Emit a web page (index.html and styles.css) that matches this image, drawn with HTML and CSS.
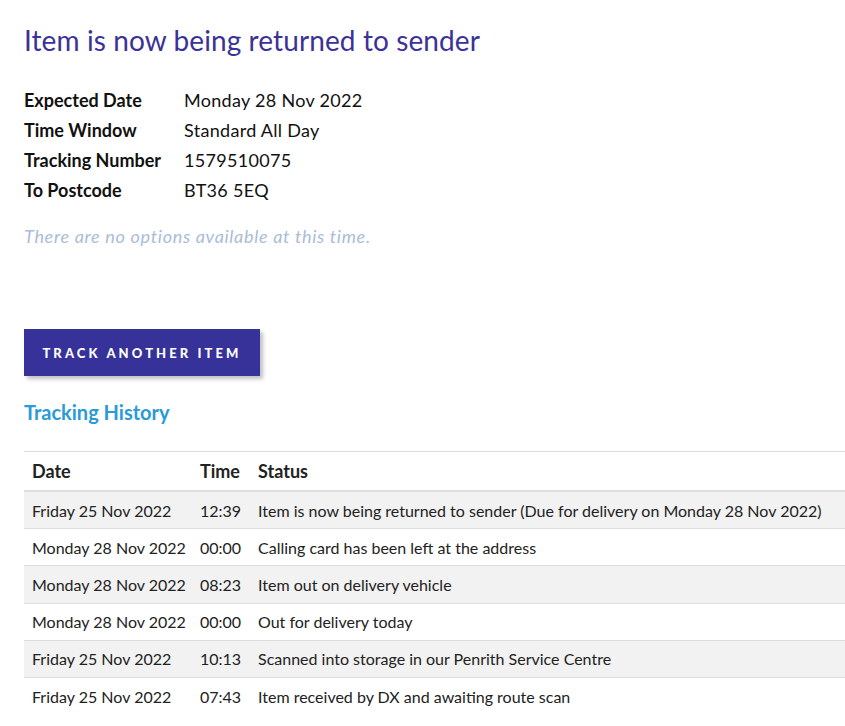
FILE: index.html
```html
<!DOCTYPE html>
<html>
<head>
<meta charset="utf-8">
<link rel="stylesheet" href="styles.css">
</head>
<body>
<main class="page">
  <h1 class="title">Item is now being returned to sender</h1>
  <dl class="details">
    <div class="row"><dt>Expected Date</dt><dd>Monday 28 Nov 2022</dd></div>
    <div class="row"><dt>Time Window</dt><dd>Standard All Day</dd></div>
    <div class="row"><dt>Tracking Number</dt><dd>1579510075</dd></div>
    <div class="row"><dt>To Postcode</dt><dd>BT36 5EQ</dd></div>
  </dl>
  <p class="no-options">There are no options available at this time.</p>
  <button class="btn">TRACK ANOTHER ITEM</button>
  <h2 class="history-title">Tracking History</h2>
  <table class="history">
    <colgroup><col class="c-date"><col class="c-time"><col></colgroup>
    <thead>
      <tr><th>Date</th><th>Time</th><th>Status</th></tr>
    </thead>
    <tbody>
      <tr><td>Friday 25 Nov 2022</td><td>12:39</td><td>Item is now being returned to sender (Due for delivery on Monday 28 Nov 2022)</td></tr>
      <tr><td>Monday 28 Nov 2022</td><td>00:00</td><td>Calling card has been left at the address</td></tr>
      <tr><td>Monday 28 Nov 2022</td><td>08:23</td><td>Item out on delivery vehicle</td></tr>
      <tr><td>Monday 28 Nov 2022</td><td>00:00</td><td>Out for delivery today</td></tr>
      <tr><td>Friday 25 Nov 2022</td><td>10:13</td><td>Scanned into storage in our Penrith Service Centre</td></tr>
      <tr><td>Friday 25 Nov 2022</td><td>07:43</td><td>Item received by DX and awaiting route scan</td></tr>
    </tbody>
  </table>
</main>
</body>
</html>
```
FILE: styles.css
```css
html, body {
  margin: 0;
  padding: 0;
  background: #fff;
}
body {
  font-family: Lato, "Liberation Sans", sans-serif;
  color: #111;
}
.page {
  padding: 24px 0 0 24px;
}
.title {
  margin: 0;
  font-size: 28px;
  font-weight: 400;
  line-height: 32px;
  letter-spacing: 0.1px;
  color: #3b3298;
}
.details {
  margin: 29px 0 0 0;
}
.row {
  display: flex;
  height: 30px;
  align-items: center;
  font-size: 18px;
}
.row dt {
  width: 160px;
  font-weight: 700;
}
.row dd {
  margin: 0;
  letter-spacing: 0.3px;
}
.no-options {
  margin: 19px 0 0 0;
  font-size: 18px;
  font-style: italic;
  letter-spacing: 0.7px;
  color: #aabcd8;
  line-height: 24px;
}
.btn {
  display: block;
  margin-top: 81px;
  width: 236px;
  height: 47px;
  border: 0;
  padding: 0;
  background: #36329a;
  color: #fff;
  font-family: inherit;
  font-weight: 900;
  font-size: 13px;
  letter-spacing: 3.1px;
  box-shadow: 3px 3px 4px rgba(0,0,0,0.25);
}
.history-title {
  margin: 23px 0 0 0;
  font-size: 20px;
  line-height: 26px;
  font-weight: 700;
  color: #2a9ad8;
}
.history {
  margin-top: 26px;
  width: 821px;
  table-layout: fixed;
  border-collapse: collapse;
  font-size: 16px;
  color: #222;
}
.history th {
  text-align: left;
  font-weight: 700;
  font-size: 18px;
  height: 38px;
  padding: 0 8px;
  border-top: 1px solid #ddd;
  border-bottom: 2px solid #ddd;
}
.history td {
  height: 36.2px;
  padding: 0 8px;
  border-bottom: 1px solid #ddd;
  white-space: nowrap;
  overflow: visible;
}
.history tbody tr:nth-child(odd) td {
  background: #f2f2f2;
}
.history tbody tr:last-child td {
  border-bottom: 0;
}
.c-date {
  width: 168px;
}
.c-time {
  width: 58px;
}
```
